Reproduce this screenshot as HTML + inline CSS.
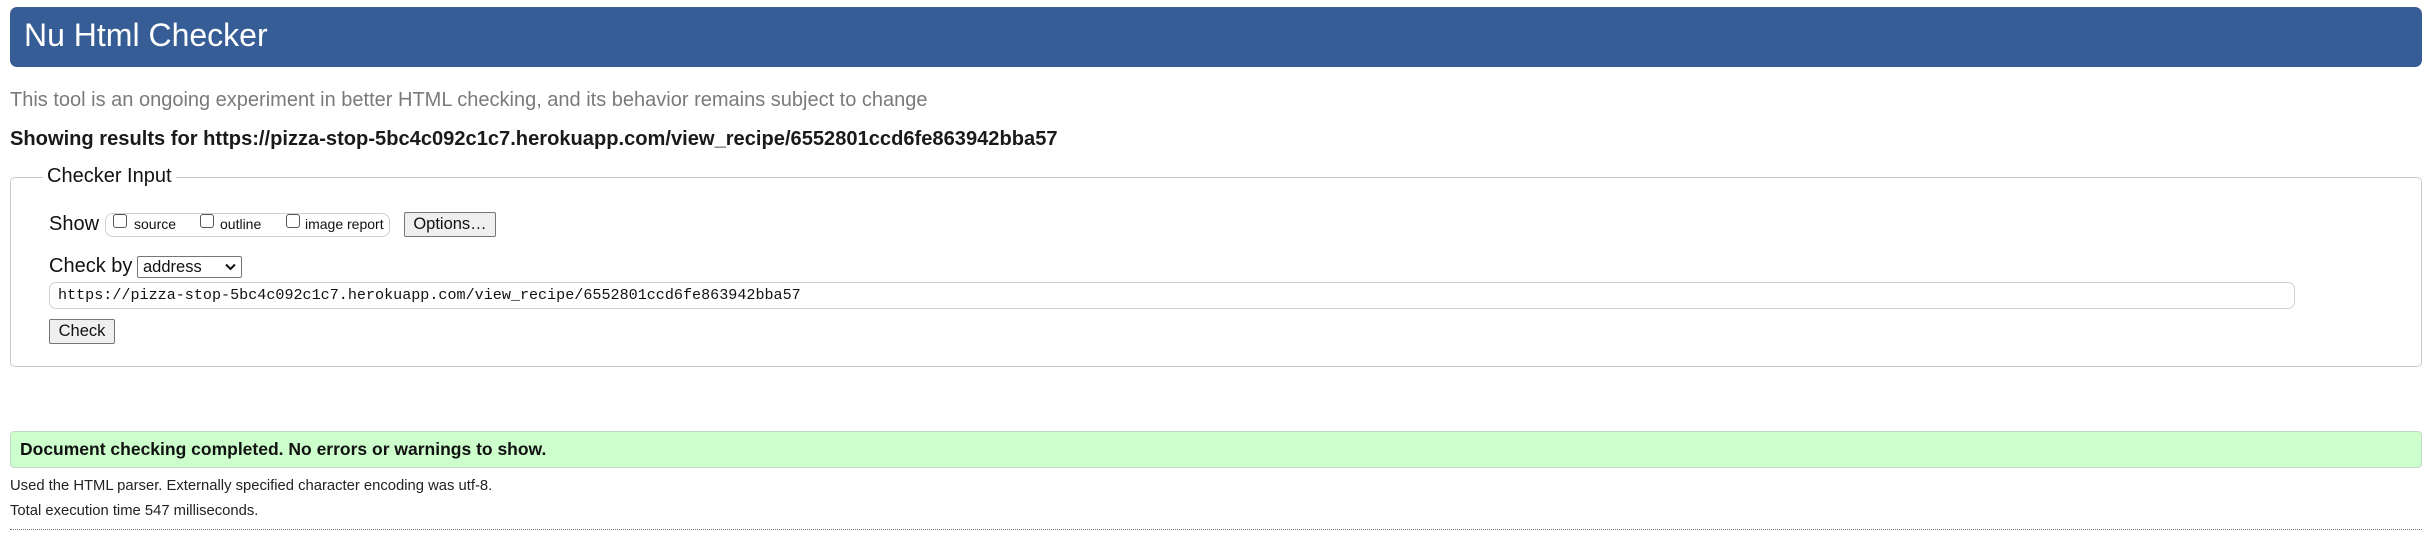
<!DOCTYPE html>
<html><head><meta charset="utf-8"><style>
*{margin:0;padding:0;box-sizing:border-box}
body{width:2427px;height:544px;background:#fff;font-family:"Liberation Sans",Arial,sans-serif;position:relative;overflow:hidden;color:#111}
.a{position:absolute;white-space:nowrap}
</style></head><body>
<div class="a" style="left:10px;top:7px;width:2412px;height:60px;background:#365d95;border-radius:7px"></div>
<div class="a" style="left:24px;top:15px;font-size:32px;line-height:40px;color:#fff">Nu Html Checker</div>
<div class="a" style="left:10px;top:88px;font-size:20px;line-height:24px;color:#7a7a7a">This tool is an ongoing experiment in better HTML checking, and its behavior remains subject to change</div>
<div class="a" style="left:10px;top:127px;font-size:20.1px;line-height:24px;font-weight:bold;color:#1a1a1a">Showing results for https://pizza-stop-5bc4c092c1c7.herokuapp.com/view_recipe/6552801ccd6fe863942bba57</div>

<div class="a" style="left:10px;top:177px;width:2412px;height:190px;border:1.5px solid #cacaca;border-radius:5px"></div>
<div class="a" style="left:43px;top:164px;padding:0 4px;background:#fff;font-size:20px;line-height:24px;color:#111">Checker Input</div>

<div class="a" style="left:49px;top:212px;font-size:20px;line-height:24px">Show</div>
<div class="a" style="left:105px;top:213px;width:285px;height:24px;border:1.5px solid #cfcfcf;border-radius:8px"></div>
<div class="a" style="left:113px;top:214px;width:14px;height:14px;border:1.5px solid #555;border-radius:3px"></div>
<div class="a" style="left:134px;top:216px;font-size:14px;line-height:17px">source</div>
<div class="a" style="left:200px;top:214px;width:14px;height:14px;border:1.5px solid #555;border-radius:3px"></div>
<div class="a" style="left:220px;top:216px;font-size:14px;line-height:17px">outline</div>
<div class="a" style="left:286px;top:214px;width:14px;height:14px;border:1.5px solid #555;border-radius:3px"></div>
<div class="a" style="left:305px;top:216px;font-size:14px;line-height:17px">image report</div>
<div class="a" style="left:404px;top:212px;width:92px;height:25px;background:#efefef;border:1px solid #767676;border-radius:2px;font-size:16.5px;line-height:23px;text-align:center">Options…</div>

<div class="a" style="left:49px;top:254px;font-size:20px;line-height:24px">Check by</div>
<div class="a" style="left:137px;top:256px;width:105px;height:22px;border:1px solid #767676;border-radius:2px;font-size:16.5px;line-height:20px;padding-left:5px">address</div>
<svg class="a" style="left:225px;top:263px" width="11" height="8" viewBox="0 0 11 8"><path d="M1 1.5 L5.5 6 L10 1.5" fill="none" stroke="#111" stroke-width="2"/></svg>

<div class="a" style="left:49px;top:282px;width:2246px;height:27px;border:1.5px solid #cfcfcf;border-radius:7px"></div>
<div class="a" style="left:58px;top:285px;font-family:'Liberation Mono',monospace;font-size:15.1px;line-height:20px;color:#111">https://pizza-stop-5bc4c092c1c7.herokuapp.com/view_recipe/6552801ccd6fe863942bba57</div>
<div class="a" style="left:49px;top:319px;width:66px;height:25px;background:#efefef;border:1px solid #767676;border-radius:2px;font-size:16.5px;line-height:23px;text-align:center">Check</div>

<div class="a" style="left:10px;top:431px;width:2412px;height:37px;background:#ccffcc;border:1.5px solid #c4d8c4;border-radius:4px"></div>
<div class="a" style="left:20px;top:439px;font-size:17.5px;line-height:20px;font-weight:bold;color:#111">Document checking completed. No errors or warnings to show.</div>
<div class="a" style="left:10px;top:478px;font-size:14.8px;line-height:17px;color:#222">Used the HTML parser. Externally specified character encoding was utf-8.</div>
<div class="a" style="left:10px;top:503px;font-size:14.8px;line-height:17px;color:#222">Total execution time 547 milliseconds.</div>
<div class="a" style="left:10px;top:529px;width:2412px;height:0;border-top:1px dotted #777"></div>
</body></html>
